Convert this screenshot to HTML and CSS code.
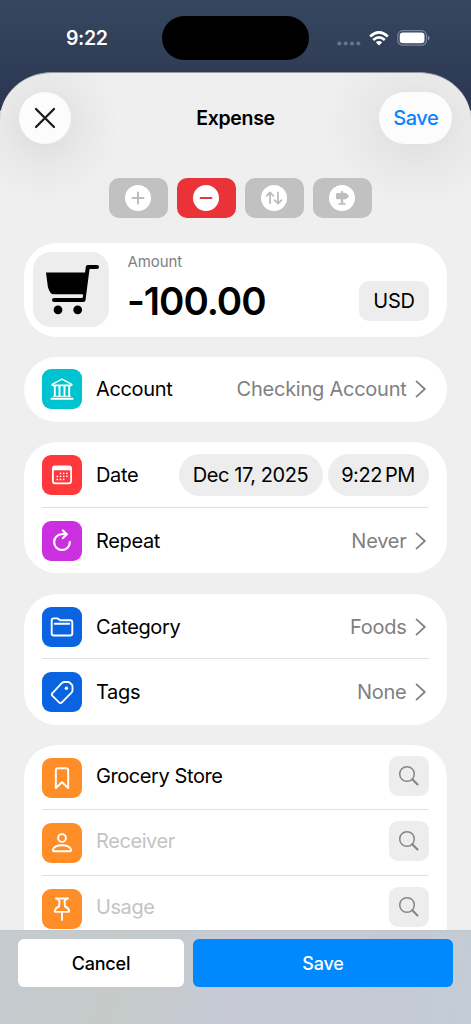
FILE: index.html
```html
<!DOCTYPE html>
<html lang="en">
<head>
<meta charset="utf-8">
<meta name="viewport" content="width=device-width, initial-scale=1">
<title>Expense</title>
<link rel="stylesheet" href="styles.css">
</head>
<body>
<svg class="defs" aria-hidden="true">
  <symbol id="chevron" viewBox="0 0 12 18"><path d="M1.500 1.400 9.800 9l-8.300 7.600" fill="none" stroke="#808080" stroke-width="1.700" stroke-linecap="round" stroke-linejoin="round"/></symbol>
  <symbol id="search" viewBox="0 0 22 22"><g fill="none" stroke="#858585" stroke-linecap="round"><circle cx="9" cy="9" r="7.300" stroke-width="1.500"/><path d="m14.300 14.300 5.200 5.200" stroke-width="2.100"/></g></symbol>
</svg>
<div class="screen">
  <header class="status">
    <span class="clock">9:22</span>
    <div class="island"></div>
    <div class="signals">
      <svg class="dots" viewBox="0 0 24 5"><g fill="#66758a"><circle cx="2.400" cy="2.500" r="2.100"/><circle cx="8.700" cy="2.500" r="2.100"/><circle cx="15" cy="2.500" r="2.100"/><circle cx="21.300" cy="2.500" r="2.100"/></g></svg>
      <svg class="wifi" viewBox="0 0 20 15"><g fill="none" stroke="#fff" stroke-width="2.700"><path d="M1.200 5.400Q10-2.600 18.800 5.400"/><path d="M4.200 8.900Q10 3.900 15.800 8.900"/></g><path d="M6.800 11.200Q10 8.600 13.200 11.200L10 14.500Z" fill="#fff"/></svg>
      <svg class="battery" viewBox="0 0 33 16"><rect x=".8" y=".7" width="28.600" height="14.500" rx="4.800" fill="none" stroke="#77839a" stroke-width="1.200"/><rect x="2.700" y="2.600" width="24.800" height="10.700" rx="3.300" fill="#fff"/><path d="M30.900 5.600q1.700.6 1.700 2.400t-1.700 2.400z" fill="#8994a5"/></svg>
    </div>
  </header>

  <main class="sheet">
    <div class="navbar">
      <button class="close" aria-label="Close"><svg viewBox="0 0 22 22"><path d="m2 2 18 18M20 2 2 20" fill="none" stroke="#1b1b1b" stroke-width="2.300" stroke-linecap="round"/></svg></button>
      <h1 class="title">Expense</h1>
      <button class="save-pill">Save</button>
    </div>

    <div class="types">
      <button class="type" aria-label="Income"><svg viewBox="0 0 26 26"><circle cx="13" cy="13" r="13" fill="#fff"/><path d="M13 7.500v11M7.500 13h11" stroke="#bdbdbd" stroke-width="2" stroke-linecap="round"/></svg></button>
      <button class="type active" aria-label="Expense"><svg viewBox="0 0 26 26"><circle cx="13" cy="13" r="13" fill="#fff"/><path d="M7.700 13h10.600" stroke="#e8343a" stroke-width="2.200" stroke-linecap="round"/></svg></button>
      <button class="type" aria-label="Transfer"><svg viewBox="0 0 26 26"><circle cx="13" cy="13" r="13" fill="#fff"/><path d="M9 18.300V7.800M5.600 10.800 9 7.400l3.400 3.400M17 7.400v10.500M13.600 15.200l3.400 3.400 3.400-3.400" fill="none" stroke="#bdbdbd" stroke-width="1.800" stroke-linecap="round" stroke-linejoin="round"/></svg></button>
      <button class="type" aria-label="Template"><svg viewBox="0 0 26 26"><circle cx="13" cy="13" r="13" fill="#fff"/><path d="M8.300 8.100h3.500V6.800q0-.9 1.200-.9t1.200.9v1.300h2.900l3 3.100-3 3.100h-2.900v4h2.200q.7 0 .7.700t-.7.700H9.700q-.7 0-.7-.7t.7-.7h2.100v-4H8.300q-1.400 0-1.400-1.400V9.500q0-1.400 1.400-1.400Z" fill="#bdbdbd"/></svg></button>
    </div>

    <section class="card amount">
      <div class="cart"><svg viewBox="0 0 54 50"><path d="M0 7.500h40l-2.800 22H8Q3.800 29.500 1.800 21.500Z"/><path d="M51 2.100h-9.200L37.500 35H8" fill="none" stroke="#000" stroke-width="4" stroke-linecap="round" stroke-linejoin="round"/><path d="M5 29.500h32.200l-.4 3.200H7Z" fill="#ededed"/><circle cx="12" cy="44.800" r="4.400"/><circle cx="31.700" cy="44.800" r="4.400"/></svg></div>
      <div class="amount-body">
        <span class="amount-label">Amount</span>
        <span class="amount-value">-100.00</span>
      </div>
      <button class="currency">USD</button>
    </section>

    <section class="card">
      <div class="row">
        <span class="badge teal"><svg viewBox="0 0 24 24"><g fill="none" stroke="#fff" stroke-linejoin="round"><path d="M2.200 7.300 12 2.200l9.800 5.100v1H2.200z" stroke-width="1.500"/><path d="M4.800 9v10M9.500 9v10M14.500 9v10M19.200 9v10" stroke-width="1.900"/><path d="M3.200 9.200h3.200M7.900 9.200h3.200M12.900 9.200h3.200M17.600 9.200h3.200M3 19.300h18" stroke-width="1"/><path d="M1.400 21.800h21.200" stroke-width="1.900" stroke-linecap="round"/></g></svg></span>
        <span class="label">Account</span><span class="value">Checking Account</span><svg class="chevron"><use href="#chevron"/></svg>
      </div>
    </section>

    <section class="card">
      <div class="row">
        <span class="badge red"><svg viewBox="0 0 24 24"><path fill="#fff" fill-rule="evenodd" d="M5 2.500h14q3 0 3 3v12.700q0 3-3 3H5q-3 0-3-3V5.500q0-3 3-3ZM4.300 7.200q-.5 0-.5.600v10q0 1.600 1.600 1.600h13.200q1.600 0 1.600-1.600v-10q0-.6-.5-.6Z"/><g fill="none" stroke="#fff" stroke-width="1.800" stroke-linecap="round" stroke-dasharray="0 3.200"><path d="M10.500 10.300h6.500M7.300 13.300h9.700M7.300 16.400h6.500"/></g></svg></span>
        <span class="label">Date</span><span class="pill date">Dec 17, 2025</span><span class="pill time">9:22<i></i>PM</span>
      </div>
      <div class="row">
        <span class="badge purple"><svg viewBox="0 0 24 24"><path d="M19.900 13.100a7.900 7.900 0 1 1-7.900-7.900q2.600-.4 4.600 0M12.900 1.500l3.900 3.700-3.900 3.800" fill="none" stroke="#fff" stroke-width="2.200" stroke-linecap="round" stroke-linejoin="round"/></svg></span>
        <span class="label">Repeat</span><span class="value">Never</span><svg class="chevron"><use href="#chevron"/></svg>
      </div>
    </section>

    <section class="card">
      <div class="row">
        <span class="badge blue"><svg viewBox="0 0 24 24"><path d="M1.700 18.500V5.400q0-2 2-2h3.400q.8 0 1.400.6l.7.700q.5.500 1.200.5h9.900q2 0 2 2v11.300q0 2-2 2H3.700q-2 0-2-2ZM4.700 8.800h14.600" fill="none" stroke="#fff" stroke-width="1.900" stroke-linecap="round"/></svg></span>
        <span class="label">Category</span><span class="value">Foods</span><svg class="chevron"><use href="#chevron"/></svg>
      </div>
      <div class="row">
        <span class="badge blue"><svg viewBox="0 0 24 24"><path d="M11.700 3.200q1-1.200 2.500-1.200H18q1.200 0 2 .8l1.700 1.700q.8.800.8 2v3.700q0 1.500-1 2.500l-9.600 9.700q-1.400 1.400-2.800 0l-6.600-6.600q-1.400-1.400 0-2.800Z" fill="none" stroke="#fff" stroke-width="1.800"/><circle cx="16.400" cy="8.200" r="1.700" fill="#fff"/></svg></span>
        <span class="label">Tags</span><span class="value">None</span><svg class="chevron"><use href="#chevron"/></svg>
      </div>
    </section>

    <section class="card fields">
      <div class="row">
        <span class="badge orange"><svg viewBox="0 0 24 24"><path d="M5.800 21.900V4.600q0-2.400 2.400-2.400h7.600q2.400 0 2.400 2.400v17.300L12 16.300Z" fill="none" stroke="#fff" stroke-width="2" stroke-linejoin="round"/></svg></span>
        <span class="label">Grocery Store</span><button class="find" aria-label="Search"><svg><use href="#search"/></svg></button>
      </div>
      <div class="row">
        <span class="badge orange"><svg viewBox="0 0 24 24"><g fill="none" stroke="#fff" stroke-width="1.900"><circle cx="12" cy="7" r="3.900"/><path d="M4.300 20.300h15.400q1.700 0 1.400-1.700-1.600-4.400-9.100-4.400t-9.100 4.400q-.3 1.700 1.400 1.700Z"/></g></svg></span>
        <span class="label hint">Receiver</span><button class="find" aria-label="Search"><svg><use href="#search"/></svg></button>
      </div>
      <div class="row">
        <span class="badge orange"><svg viewBox="0 0 24 24"><path d="M6 1.500h12M7.500 1.900l2 2.200-.5 5.400q-3.900 1.600-4.200 4.500-.1.900.9.900h12.600q1 0 .9-.9-.3-2.900-4.200-4.500l-.5-5.400 2-2.200M12 15v8" fill="none" stroke="#fff" stroke-width="1.900" stroke-linecap="round" stroke-linejoin="round"/></svg></span>
        <span class="label hint">Usage</span><button class="find" aria-label="Search"><svg><use href="#search"/></svg></button>
      </div>
    </section>
  </main>

  <footer class="footer">
    <button class="cancel">Cancel</button>
    <button class="save">Save</button>
  </footer>
</div>
</body>
</html>
```

FILE: styles.css
```css
* { box-sizing: border-box; }
body { margin: 0; font-family: Inter, "Liberation Sans", sans-serif; color: #000; }
button { border: 0; padding: 0; margin: 0; font: inherit; color: inherit; }
svg { display: block; flex: none; }
.defs { position: absolute; width: 0; height: 0; }

.screen {
  width: 471px; height: 1024px; overflow: hidden;
  display: flex; flex-direction: column;
  background: linear-gradient(#36475f 0, #2b3652 110px, #e5e6ea 111px);
}

.status { flex: none; height: 72px; display: flex; align-items: flex-start; }
.clock { width: 162px; padding: 26px 0 0 66px; font-size: 19.500px; line-height: 25px; font-weight: 600; letter-spacing: -.4px; color: #fff; }
.island { width: 147px; height: 43.500px; margin-top: 16px; border-radius: 22px; background: #000; }
.signals { display: flex; padding: 30px 0 0 28px; }
.dots { width: 24px; height: 5px; margin-top: 11px; }
.wifi { width: 20px; height: 15px; margin: 1px 0 0 8px; }
.battery { width: 33px; height: 16px; margin-left: 8px; }

.sheet {
  flex: 1; min-height: 0; overflow: hidden; padding: 0 24px;
  border-top: 1px solid #9399a3; border-radius: 52px 52px 0 0 / 48px 48px 0 0;
  background:
    radial-gradient(circle at 44px 52px, #e1e1e1 20px, #e8e8e8 40px, #efefef00 75px),
    radial-gradient(ellipse 90px 80px at 416px 52px, #e1e1e1 20%, #e8e8e8 55%, #efefef00),
    #efefef;
}
.navbar { display: flex; align-items: center; justify-content: space-between; height: 52px; margin: 18.500px -5px 0 -5.500px; }
.close, .save-pill { height: 52px; border-radius: 26px; background: #fcfcfc; }
.close { width: 52px; display: grid; place-items: center; }
.close svg { width: 22px; height: 22px; }
.title { margin: 0 0 0 21px; font-size: 19.500px; font-weight: 600; letter-spacing: -.3px; }
.save-pill { width: 72.500px; color: #0a84ff; font-size: 20px; font-weight: 500; letter-spacing: -.5px; }

.types { display: flex; gap: 9.500px; height: 39px; margin: 34.500px 0 0 85px; }
.type { width: 58.500px; height: 39.500px; border-radius: 10px; background: #c1c1c1; display: grid; place-items: center; }
.type.active { background: #e93338; }
.type svg { width: 26px; height: 26px; }

.card { margin-top: 20.300px; padding: 0 18.500px 0 18px; border-radius: 33px; background: #fff; }
.amount { display: flex; height: 94px; margin-top: 25.700px; padding: 9px 18px 0 9px; }
.amount + .card .row { height: 65px; }
.cart { width: 75.500px; height: 75.500px; border-radius: 18px; background: #ededed; padding: 13px 0 0 13px; }
.cart svg { width: 54px; height: 50px; }
.amount-body { flex: 1; display: flex; flex-direction: column; padding-left: 19px; }
.amount-label { font-size: 15px; line-height: 19px; color: #808080; letter-spacing: -.1px; }
.amount-value { font-size: 38.500px; line-height: 46px; font-weight: 600; margin-top: 7.500px; margin-left: -.5px; letter-spacing: -1.050px; }
.currency { width: 70px; height: 40px; margin-top: 29px; border-radius: 10px; background: #ededed; font-size: 20px; letter-spacing: -.2px; }

.row { display: flex; align-items: center; height: 65.600px; font-size: 20px; letter-spacing: -.35px; }
.row:not(:last-child) {
  background: linear-gradient(#dfdfdf, #dfdfdf) bottom / 100% 1.300px no-repeat;
}
.badge { flex: none; width: 40px; height: 40px; border-radius: 9px; display: grid; place-items: center; }
.badge svg { width: 24px; height: 24px; }
.teal { background: #00c3d0; }
.red { background: #ff383c; }
.purple { background: #cb30e0; }
.blue { background: #0a64e1; }
.orange { background: #ff8d28; }
.label { margin-left: 14px; margin-right: auto; }
.value { color: #808080; letter-spacing: -.25px; }
.chevron { width: 12px; height: 18px; margin: 0 1.500px 0 8.500px; }
.pill { height: 42px; line-height: 42px; border-radius: 21px; background: #ededed; text-align: center; letter-spacing: -.45px; }
.date { width: 144px; }
.time { width: 101px; margin-left: 5px; }
.time i { display: inline-block; width: 3px; }
.hint { color: #c4c4c6; }
.find { width: 40px; height: 40px; border-radius: 9px; background: #ededed; display: grid; place-items: center; }
.find svg { width: 22px; height: 22px; }
.fields { height: 240px; margin-top: 20px; }
.fields .row { letter-spacing: -.42px; }
.fields .label, .fields .find { margin-bottom: 4px; }

.footer {
  flex: none; height: 94px; display: flex; gap: 9px; padding: 8px 18px 0;
  border-top: 1px solid #c0c4cc;
  background: linear-gradient(100deg, #c5cbd0, #c5cac9 25%, #c7cad6 50%, #c4cad5 85%, #c3cdd5);
}
.cancel, .save { height: 48px; border-radius: 6px; font-size: 18px; font-weight: 500; letter-spacing: -.2px; }
.cancel { width: 166px; background: #fff; }
.save { flex: 1; background: #0088ff; color: #fff; }
```
